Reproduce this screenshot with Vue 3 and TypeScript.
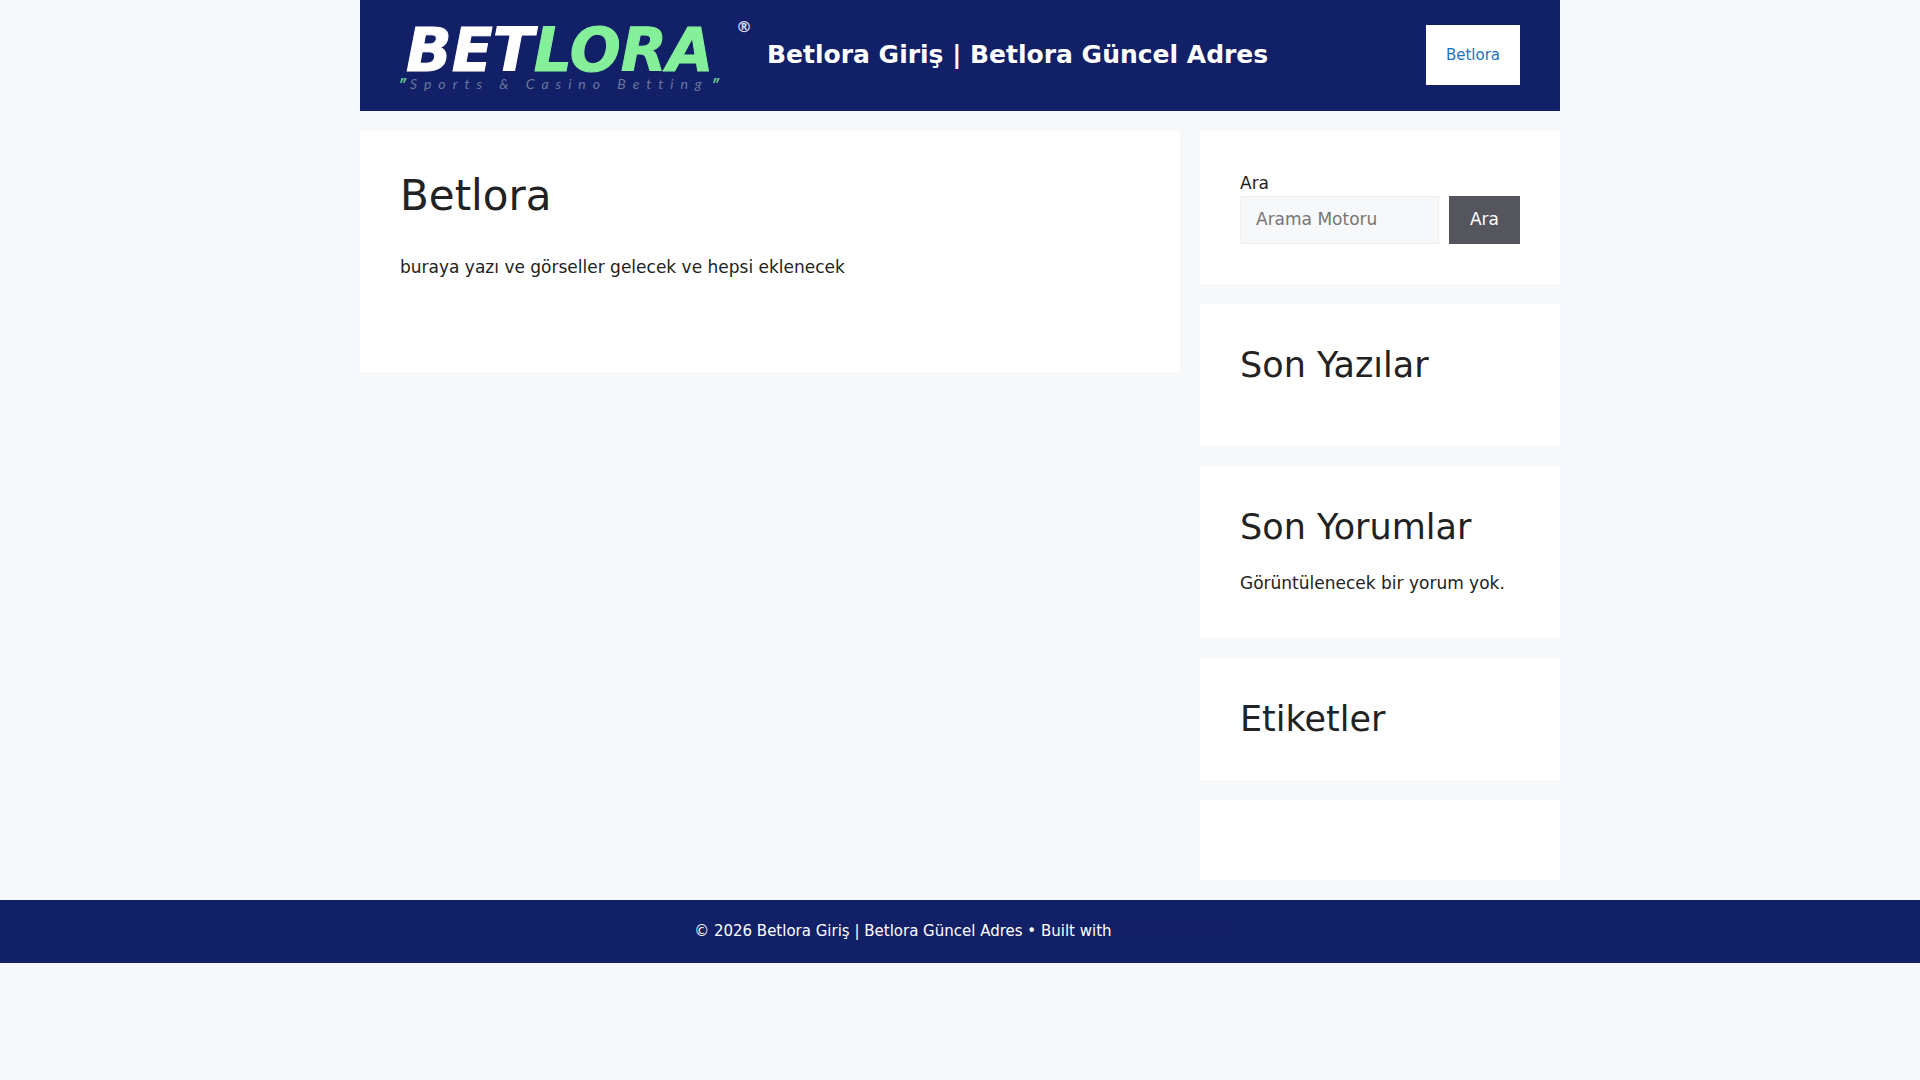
<script setup lang="ts">
import { ref } from 'vue'

interface Widget {
  title?: string
  body?: string
  list?: boolean
}

const siteTitle = 'Betlora Giriş | Betlora Güncel Adres'
const query = ref('')

const widgets: Widget[] = [
  { title: 'Son Yazılar', list: true },
  { title: 'Son Yorumlar', body: 'Görüntülenecek bir yorum yok.' },
  { title: 'Etiketler' },
  {},
]
</script>

<template>
  <div class="page">
    <header class="site-header">
      <a class="logo" href="#" :aria-label="siteTitle">
        <svg viewBox="0 0 350 70" width="350" height="70">
          <text class="mark" x="6" y="51">BET<tspan class="green">LORA</tspan></text>
          <text class="registered" x="336" y="12">®</text>
          <text class="quote" x="-2" y="70">″</text>
          <text class="tagline" x="10" y="69">Sports &amp; Casino Betting</text>
          <text class="quote" x="311" y="70">″</text>
        </svg>
      </a>
      <p class="site-title"><a href="#">{{ siteTitle }}</a></p>
      <nav class="main-nav">
        <a href="#">Betlora</a>
      </nav>
    </header>

    <div class="columns">
      <main class="card content">
        <h1>Betlora</h1>
        <p>buraya yazı ve görseller gelecek ve hepsi eklenecek</p>
      </main>

      <aside class="sidebar">
        <form class="card" role="search" @submit.prevent>
          <label class="search-label" for="search">Ara</label>
          <div class="search-row">
            <input id="search" v-model="query" type="search" placeholder="Arama Motoru" />
            <button type="submit">Ara</button>
          </div>
        </form>
        <section v-for="(widget, index) in widgets" :key="index" class="card">
          <h2 v-if="widget.title" :class="{ spaced: widget.list || widget.body }">{{ widget.title }}</h2>
          <p v-if="widget.body" class="widget-text">{{ widget.body }}</p>
        </section>
      </aside>
    </div>

    <footer class="site-footer">
      © 2026 {{ siteTitle }} • Built with <a href="#">GeneratePress</a>
    </footer>
  </div>
</template>

<style>
body {
  margin: 0;
  background: #f7f8fa;
}
</style>

<style scoped>
.page {
  font-family: 'DejaVu Sans', sans-serif;
  font-size: 17px;
  line-height: 26px;
  color: #222;
}

.page * {
  box-sizing: border-box;
}

h1,
h2,
p {
  margin: 0;
  font-weight: 400;
}

a {
  text-decoration: none;
}

.site-header {
  display: flex;
  align-items: center;
  max-width: 1200px;
  margin: 0 auto;
  padding: 20px 40px 21px;
  background: #122068;
}

.logo {
  display: flex;
  margin-right: 17px;
}

.logo svg {
  overflow: visible;
}

.mark {
  font: italic 700 60px 'DejaVu Sans', sans-serif;
  fill: #fff;
  stroke: #fff;
  stroke-width: 1px;
}

.green {
  fill: #85f09a;
  stroke: #85f09a;
}

.registered {
  font: 700 16px 'DejaVu Sans', sans-serif;
  fill: #d5d9ea;
}

.tagline {
  font: italic 400 14px Lato, sans-serif;
  letter-spacing: 7px;
  fill: #6b779c;
}

.quote {
  font: italic 700 16px Lato, sans-serif;
  fill: #6fd08e;
}

.site-title {
  font-size: 25px;
  font-weight: 700;
  line-height: 30px;
}

.site-title a {
  color: #fff;
}

.main-nav {
  margin-left: auto;
}

.main-nav a {
  display: block;
  padding: 0 20px;
  background: #fff;
  color: #1e73be;
  font-size: 15px;
  line-height: 60px;
}

.columns {
  display: flex;
  align-items: flex-start;
  gap: 20px;
  max-width: 1200px;
  margin: 20px auto;
}

.card {
  padding: 40px;
  background: #fff;
}

.content {
  flex: 1;
  min-width: 0;
}

.content h1 {
  margin-bottom: 33px;
  font-size: 42px;
  line-height: 50px;
}

.content p {
  margin-bottom: 52px;
}

.sidebar {
  display: flex;
  flex-direction: column;
  gap: 20px;
  width: 30%;
}

.search-label {
  display: block;
  line-height: 25px;
}

.search-row {
  display: flex;
  gap: 10px;
}

.search-row input {
  flex: 1;
  min-width: 0;
  height: 48px;
  padding: 9px 15px 11px;
  border: 1px solid #efefef;
  border-radius: 0;
  background: #f7f8fa;
  color: #222;
  font: inherit;
  appearance: none;
}

.search-row input::placeholder {
  color: #757575;
}

.search-row button {
  padding: 9px 21px 11px;
  border: 0;
  background: #55555e;
  color: #fff;
  font: inherit;
  cursor: pointer;
}

.sidebar h2 {
  font-size: 35px;
  line-height: 42px;
}

.sidebar .spaced {
  margin-bottom: 20px;
}

.widget-text {
  line-height: 30px;
}

.site-footer {
  padding: 20px 40px;
  background: #122068;
  color: #fff;
  font-size: 15px;
  line-height: 23px;
  text-align: center;
}

.site-footer a {
  color: #131f66;
}
</style>
